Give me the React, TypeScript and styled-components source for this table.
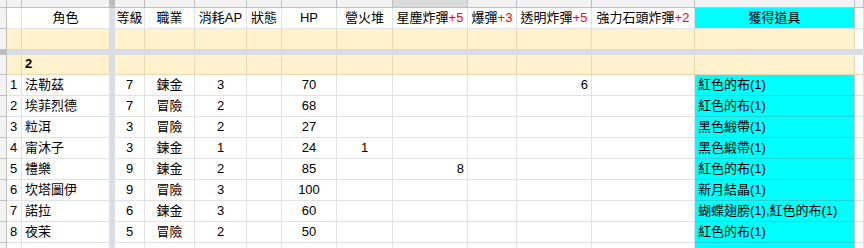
import React from 'react'
import styled, { createGlobalStyle } from 'styled-components'

const GlobalStyle = createGlobalStyle`
  html, body {
    margin: 0;
    padding: 0;
    background: #ffffff;
  }
  body {
    font-family: "Liberation Sans", "Noto Sans CJK TC", Arial, sans-serif;
    font-size: 13px;
    color: #000000;
  }
`

// column widths in px, left to right: gutter, A, B, frozen bar, then data columns, then a sliver
const COLS = [7, 15, 88, 5, 30, 50, 52, 35, 55, 56, 75, 49, 75, 103, 160, 9]
const TEMPLATE = COLS.map((w) => `${w}px`).join(' ')

const colors = {
  gutter: '#f3f3f3',
  gutterLine: '#c0c0c0',
  gridLine: '#e2e2e2',
  beige: '#fff2cc',
  beigeLine: '#e8d8b0',
  frozen: '#d9dde5',
  frozenDark: '#bdbdbd',
  cyan: '#00ffff',
  cyanLine: '#22d4d4',
  selectedHead: '#dadada',
  red: '#ff0000',
}

const Sheet = styled.div`
  width: 864px;
  height: 248px;
  overflow: hidden;
  display: flex;
  flex-direction: column;
`

const Row = styled.div<{ $h: number }>`
  display: grid;
  grid-template-columns: ${TEMPLATE};
  height: ${({ $h }) => $h}px;
  flex: none;
`

const Cell = styled.div<{
  $bg?: string
  $line?: string
  $vline?: string
  $align?: 'left' | 'center' | 'right'
}>`
  box-sizing: border-box;
  display: flex;
  align-items: flex-end;
  justify-content: ${({ $align }) =>
    $align === 'center' ? 'center' : $align === 'right' ? 'flex-end' : 'flex-start'};
  padding: 0 3px 2px;
  background: ${({ $bg }) => $bg || '#ffffff'};
  border-right: 1px solid ${({ $vline, $line }) => $vline || $line || colors.gridLine};
  border-bottom: 1px solid ${({ $line }) => $line || colors.gridLine};
  white-space: nowrap;
  line-height: 16px;
  overflow: visible;
`

const Gutter = styled.div<{ $dark?: boolean }>`
  box-sizing: border-box;
  background: ${({ $dark }) => ($dark ? colors.frozenDark : colors.gutter)};
  border-right: 1px solid ${colors.gutterLine};
  border-bottom: ${({ $dark }) => ($dark ? 'none' : `1px solid ${colors.gutterLine}`)};
`

const HeadLetter = styled.div<{ $selected?: boolean }>`
  box-sizing: border-box;
  background: ${({ $selected }) => ($selected ? colors.selectedHead : colors.gutter)};
  border-right: 1px solid ${colors.gutterLine};
  border-bottom: 1px solid ${colors.gutterLine};
`

const FrozenBar = styled.div<{ $dark?: boolean }>`
  background: ${({ $dark }) => ($dark ? colors.frozenDark : colors.frozen)};
`

const FrozenStrip = styled.div`
  grid-column: 2 / -1;
  background: ${colors.frozen};
`

const Bonus = styled.span`
  color: ${colors.red};
`

type Align = 'left' | 'center' | 'right'

// data columns after the frozen bar
const DATA_ALIGN: Align[] = [
  'center', 'center', 'center', 'center', 'center', 'center',
  'right', 'right', 'right', 'right', 'left', 'left',
]

const headers: React.ReactNode[] = [
  '等級',
  '職業',
  '消耗AP',
  '狀態',
  'HP',
  '營火堆',
  <>星塵炸彈<Bonus>+5</Bonus></>,
  <>爆彈<Bonus>+3</Bonus></>,
  <>透明炸彈<Bonus>+5</Bonus></>,
  <>強力石頭炸彈<Bonus>+2</Bonus></>,
  '獲得道具',
  '',
]

const rows: string[][] = [
  ['1', '法勒茲', '7', '鍊金', '3', '', '70', '', '', '', '6', '', '紅色的布(1)', ''],
  ['2', '埃菲烈德', '7', '冒險', '2', '', '68', '', '', '', '', '', '紅色的布(1)', ''],
  ['3', '粒洱', '3', '冒險', '2', '', '27', '', '', '', '', '', '黑色緞帶(1)', ''],
  ['4', '甯沐子', '3', '鍊金', '1', '', '24', '1', '', '', '', '', '黑色緞帶(1)', ''],
  ['5', '禮樂', '9', '鍊金', '2', '', '85', '', '8', '', '', '', '紅色的布(1)', ''],
  ['6', '坎塔圖伊', '9', '冒險', '3', '', '100', '', '', '', '', '', '新月結晶(1)', ''],
  ['7', '諾拉', '6', '鍊金', '3', '', '60', '', '', '', '', '', '蝴蝶翅膀(1),紅色的布(1)', ''],
  ['8', '夜茉', '5', '冒險', '2', '', '50', '', '', '', '', '', '紅色的布(1)', ''],
  ['', '', '', '', '', '', '', '', '', '', '', '', '', ''],
]

const ITEM_COL = 10 // index in data columns of 獲得道具

function BeigeRow({ h, first }: { h: number; first?: string }) {
  return (
    <Row $h={h}>
      <Gutter />
      <Cell $bg={colors.beige} $line={colors.beigeLine} />
      <Cell $bg={colors.beige} $line={colors.beigeLine}>
        {first && <b>{first}</b>}
      </Cell>
      <FrozenBar />
      {headers.map((_, i) => (
        <Cell key={i} $bg={i === 11 ? '#ffffff' : colors.beige} $line={colors.beigeLine} />
      ))}
    </Row>
  )
}

export default function App() {
  return (
    <>
      <GlobalStyle />
      <Sheet>
        <Row $h={8}>
          <Gutter />
          <HeadLetter />
          <HeadLetter />
          <FrozenBar $dark />
          {headers.map((_, i) => (
            <HeadLetter key={i} $selected={i === 6} />
          ))}
        </Row>

        <Row $h={21}>
          <Gutter />
          <Cell />
          <Cell $align="center">角色</Cell>
          <FrozenBar />
          {headers.map((h, i) => (
            <Cell
              key={i}
              $align="center"
              $bg={i === ITEM_COL ? colors.cyan : undefined}
              $vline={i === ITEM_COL ? colors.gutterLine : undefined}
            >
              {h}
            </Cell>
          ))}
        </Row>

        <BeigeRow h={21} />

        <Row $h={5}>
          <Gutter $dark />
          <FrozenStrip />
        </Row>

        <BeigeRow h={20} first="2" />

        {rows.map((r, ri) => (
          <Row key={ri} $h={21}>
            <Gutter />
            <Cell>{r[0]}</Cell>
            <Cell>{r[1]}</Cell>
            <FrozenBar />
            {r.slice(2).map((v, ci) => (
              <Cell
                key={ci}
                $align={DATA_ALIGN[ci]}
                $bg={ci === ITEM_COL ? colors.cyan : undefined}
                $line={ci === ITEM_COL ? colors.cyanLine : undefined}
                $vline={ci === ITEM_COL ? '#c8c8c8' : undefined}
              >
                {v}
              </Cell>
            ))}
          </Row>
        ))}
      </Sheet>
    </>
  )
}
